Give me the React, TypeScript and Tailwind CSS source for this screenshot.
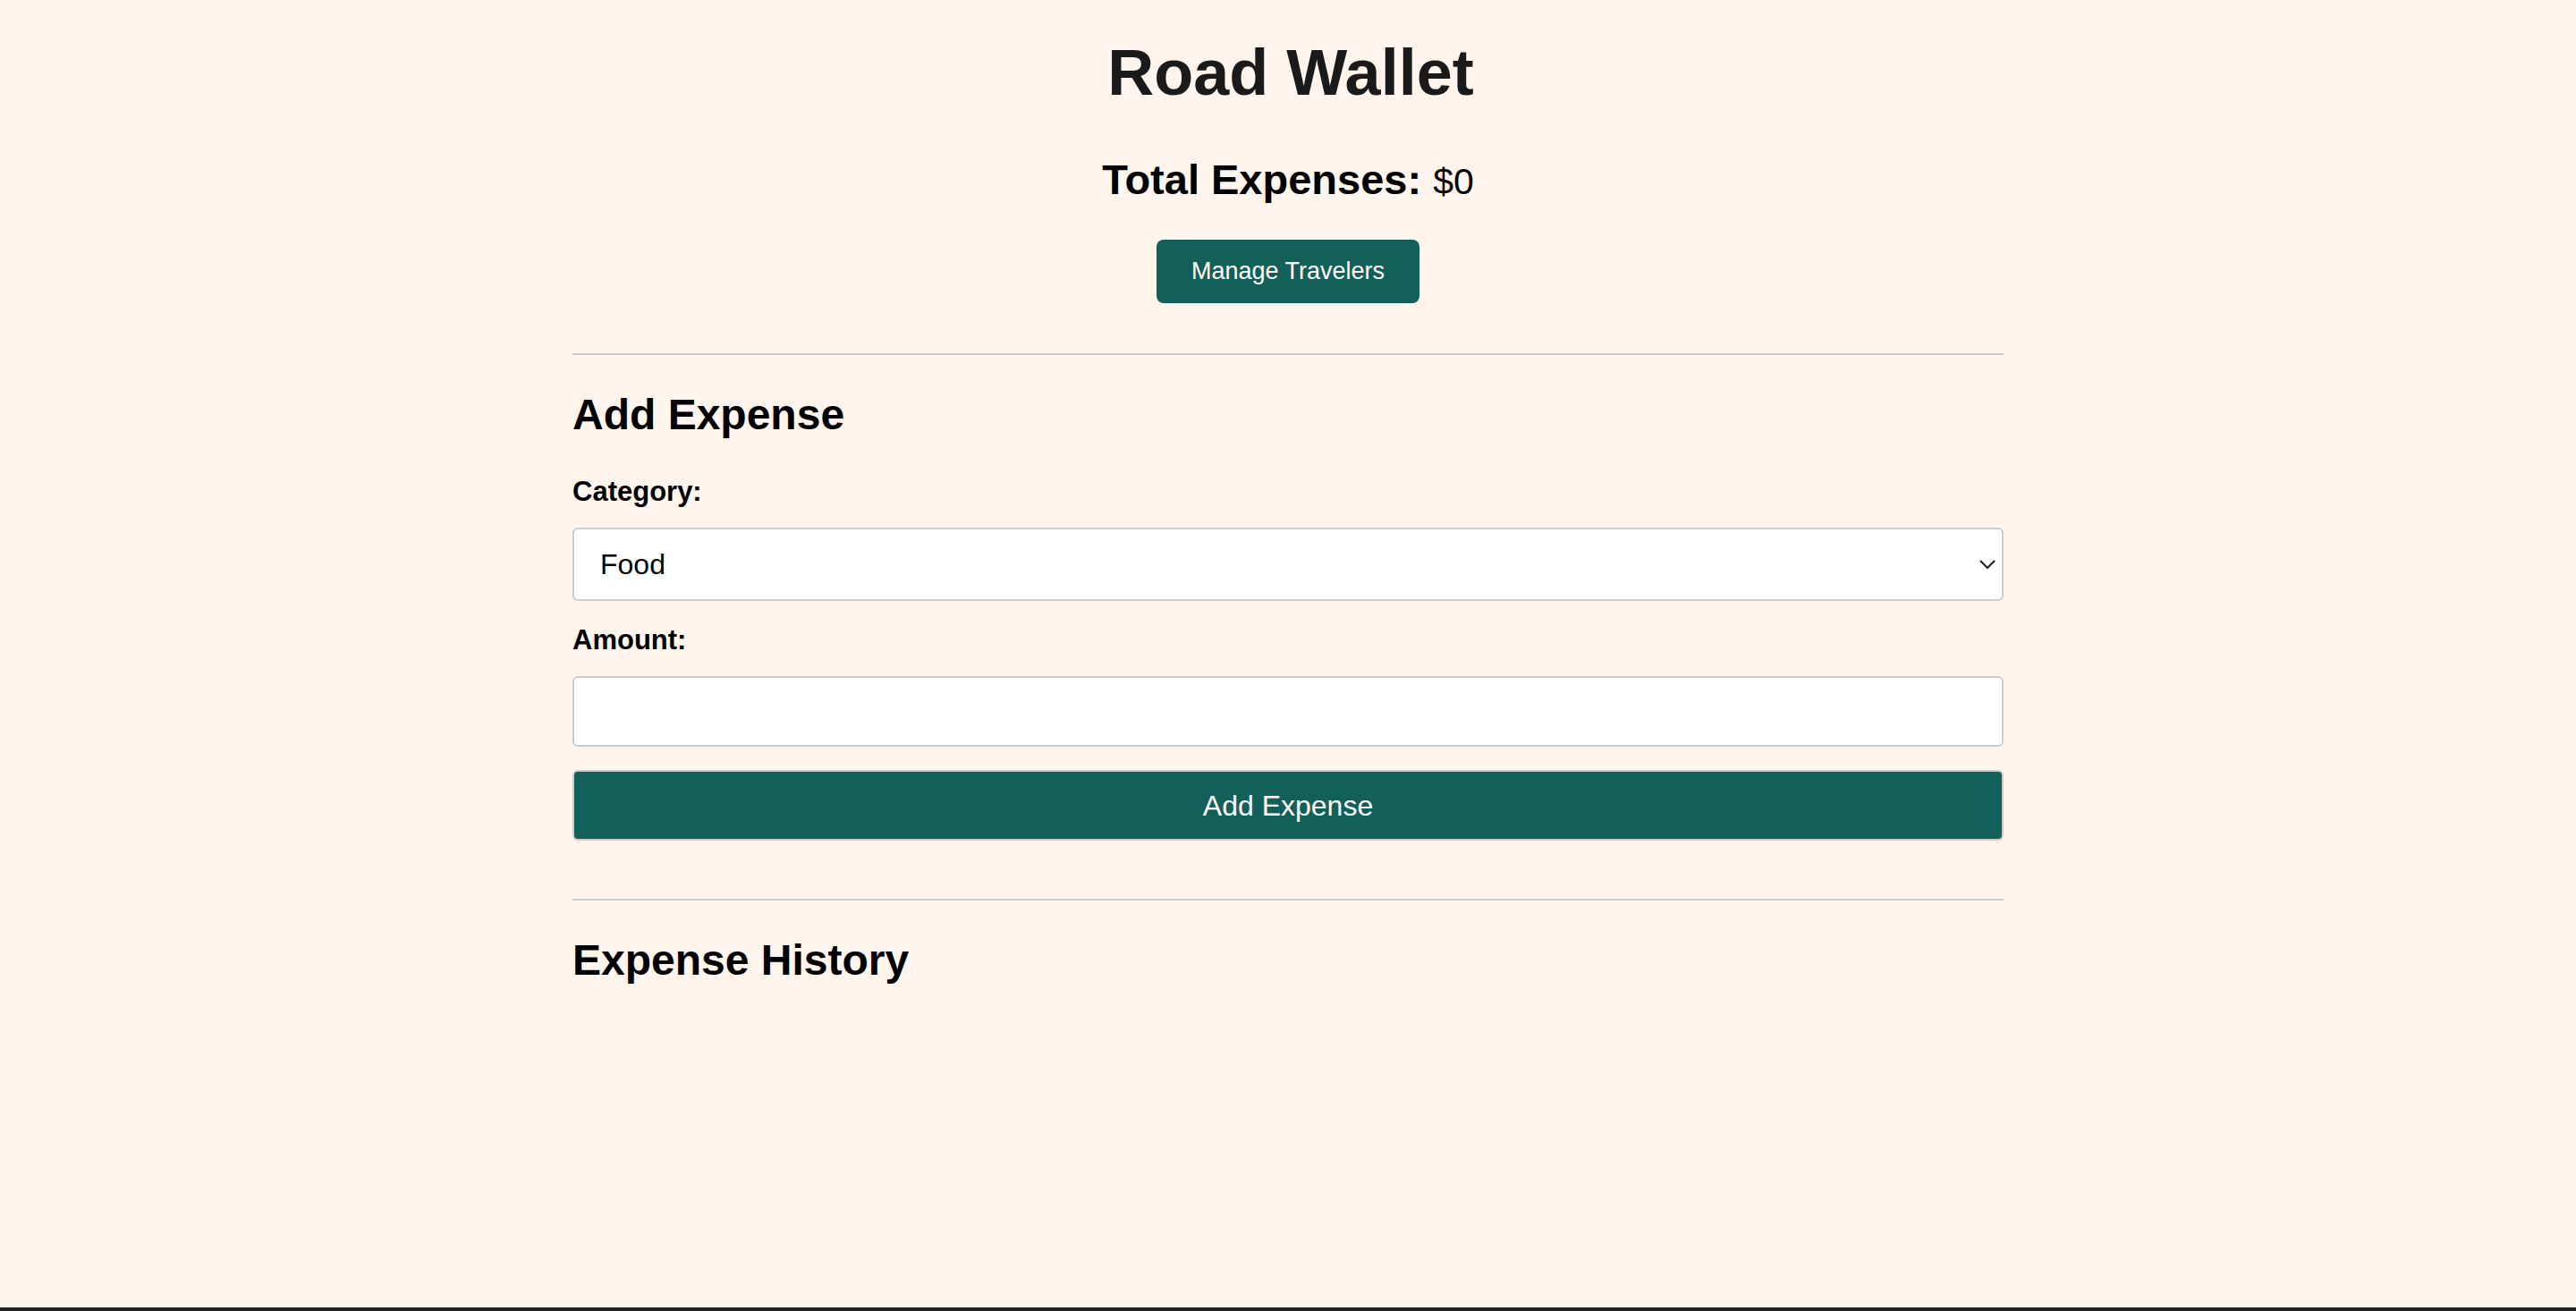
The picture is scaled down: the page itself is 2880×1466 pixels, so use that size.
import { useState } from "react";

const categories = ["Food", "Gas", "Lodging", "Activities", "Other"];

export default function App() {
  const [category, setCategory] = useState("Food");
  const [amount, setAmount] = useState("");

  return (
    <div
      className="min-h-screen flex flex-col items-center bg-[#fff5ec] border-b-4 border-[#222] text-black"
      style={{ fontFamily: '"Liberation Sans", Arial, sans-serif' }}
    >
      <h1 className="mt-[45px] pl-[6px] text-[72px] leading-none font-bold text-[#1a1a1a]">Road Wallet</h1>

      <h2 className="mt-[60px] text-[47px] leading-none font-bold">
        Total Expenses: <span className="text-[41px] font-normal">$0</span>
      </h2>

      <button className="mt-[44px] h-[71px] w-[294px] rounded-lg bg-[#135f5a] text-[27px] text-white">
        Manage Travelers
      </button>

      <div className="w-[1600px] flex flex-col">
        <hr className="mt-[56px] border-0 h-[2px] bg-[#cccccc]" />

        <h2 className="mt-[43px] text-[48px] leading-none font-bold">Add Expense</h2>

        <label className="mt-[46px] text-[31px] leading-none font-bold">Category:</label>
        <div className="relative mt-[25px]">
          <select
            value={category}
            onChange={(e) => setCategory(e.target.value)}
            className="appearance-none w-full h-[82px] rounded-md border-2 border-[#cccccc] bg-white pl-[29px] text-[32px] text-black outline-none"
          >
            {categories.map((c) => (
              <option key={c}>{c}</option>
            ))}
          </select>
          <svg
            className="pointer-events-none absolute right-[8px] top-[35px]"
            width="20"
            height="12"
            viewBox="0 0 20 12"
            fill="none"
            stroke="#222"
            strokeWidth="2.2"
          >
            <path d="M2 2l8 8 8-8" />
          </svg>
        </div>

        <label className="mt-[28px] text-[31px] leading-none font-bold">Amount:</label>
        <input
          type="number"
          value={amount}
          onChange={(e) => setAmount(e.target.value)}
          className="mt-[25px] h-[79px] w-full rounded-md border-2 border-[#cccccc] bg-white px-[29px] text-[32px] outline-none"
        />

        <button className="mt-[26px] h-[79px] w-full rounded-md border-2 border-[#cccccc] bg-[#135f5a] text-[32px] text-white">
          Add Expense
        </button>

        <hr className="mt-[65px] border-0 h-[2px] bg-[#cccccc]" />

        <h2 className="mt-[43px] text-[48px] leading-none font-bold">Expense History</h2>
      </div>
    </div>
  );
}
